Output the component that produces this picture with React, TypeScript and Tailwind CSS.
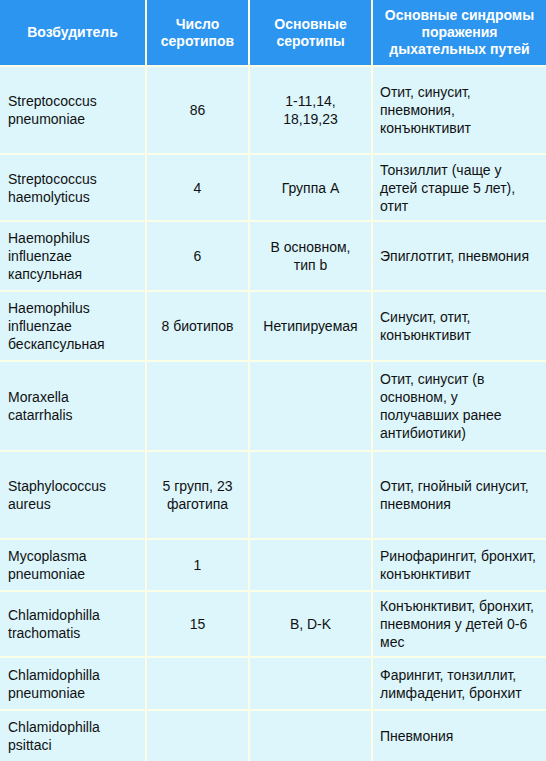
const head = [
  "Возбудитель",
  "Число\nсеротипов",
  "Основные\nсеротипы",
  "Основные синдромы\nпоражения\nдыхательных путей",
]

const rows: { h: string; cells: string[] }[] = [
  { h: "h-[86px]", cells: ["Streptococcus\npneumoniae", "86", "1-11,14,\n18,19,23", "Отит, синусит,\nпневмония,\nконъюнктивит"] },
  { h: "h-[65px]", cells: ["Streptococcus\nhaemolyticus", "4", "Группа А", "Тонзиллит (чаще у\nдетей старше 5 лет),\nотит"] },
  { h: "h-[68px]", cells: ["Haemophilus\ninfluenzae\nкапсульная", "6", "В основном,\nтип b", "Эпиглотгит, пневмония"] },
  { h: "h-[68px]", cells: ["Haemophilus\ninfluenzae\nбескапсульная", "8 биотипов", "Нетипируемая", "Синусит, отит,\nконъюнктивит"] },
  { h: "h-[88px]", cells: ["Moraxella\ncatarrhalis", "", "", "Отит, синусит (в\nосновном, у\nполучавших ранее\nантибиотики)"] },
  { h: "h-[86px]", cells: ["Staphylococcus\naureus", "5 групп, 23\nфаготипа", "", "Отит, гнойный синусит,\nпневмония"] },
  { h: "h-[50px]", cells: ["Mycoplasma\npneumoniae", "1", "", "Ринофарингит, бронхит,\nконъюнктивит"] },
  { h: "h-[64px]", cells: ["Chlamidophilla\ntrachomatis", "15", "B, D-K", "Конъюнктивит, бронхит,\nпневмония у детей 0-6\nмес"] },
  { h: "h-[51px]", cells: ["Chlamidophilla\npneumoniae", "", "", "Фарингит, тонзиллит,\nлимфаденит, бронхит"] },
  { h: "h-[50px]", cells: ["Chlamidophilla\npsittaci", "", "", "Пневмония"] },
]

function Lines({ text }: { text: string }) {
  return (
    <>
      {text.split("\n").map((l, i) => (
        <span key={i} className="block whitespace-nowrap">
          {l}
        </span>
      ))}
    </>
  )
}

export default function App() {
  return (
    <div
      className="w-[546px] h-[761px] overflow-hidden bg-[#fbfde6]"
      style={{ fontFamily: '"Liberation Sans", Arial, sans-serif' }}
    >
      <div className="grid grid-cols-[145px_101px_121px_173px] gap-[2px]">
        {head.map((t, i) => (
          <div
            key={i}
            className="h-[65px] flex flex-col items-center justify-center bg-[#2c95ef] text-white font-bold text-[14px] leading-[17px] text-center"
          >
            <Lines text={t} />
          </div>
        ))}
        {rows.map((r, ri) =>
          r.cells.map((c, ci) => (
            <div
              key={ri + "-" + ci}
              className={
                r.h +
                " flex flex-col justify-center bg-[#dcf6fc] text-[#111] text-[14px] leading-[18px] " +
                (ci === 1 || ci === 2 ? "items-center text-center" : ci === 0 ? "pl-[8px]" : "pl-[7px]")
              }
            >
              <Lines text={c} />
            </div>
          ))
        )}
      </div>
    </div>
  )
}
